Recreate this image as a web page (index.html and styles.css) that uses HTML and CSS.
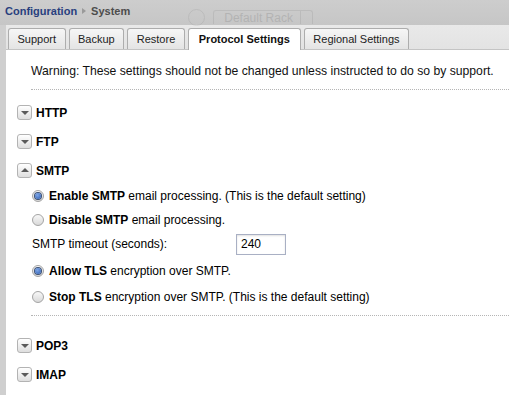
FILE: index.html
```html
<!DOCTYPE html>
<html lang="en">
<head>
    <meta charset="UTF-8">
    <meta name="viewport" content="width=device-width, initial-scale=1.0">
    <title>Configuration - System</title>
    <link rel="stylesheet" href="styles.css">
</head>
<body>
    <!-- Header with breadcrumb -->
    <div class="header">
        <div class="crumbs">
            <a href="#" class="crumb-link">Configuration</a>
            <span class="crumb-sep"></span>
            <span class="crumb-current">System</span>
        </div>
        <div class="ghost">
            <span class="ghost-circle"></span>
            <span class="ghost-button">Default Rack<span class="ghost-drop"></span></span>
        </div>
    </div>

    <div class="main">
        <div class="strip"></div>
        <div class="panel">
            <!-- Tabs -->
            <div class="tabs">
                <a href="#" class="tab">Support</a>
                <a href="#" class="tab">Backup</a>
                <a href="#" class="tab">Restore</a>
                <a href="#" class="tab active">Protocol Settings</a>
                <a href="#" class="tab">Regional Settings</a>
            </div>

            <div class="content">
                <div class="warning">Warning: These settings should not be changed unless instructed to do so by support.</div>

                <div class="sections">
                    <div class="section-head"><span class="toggle"></span>HTTP</div>
                    <div class="section-head"><span class="toggle"></span>FTP</div>
                    <div class="section-head"><span class="toggle open"></span>SMTP</div>

                    <div class="section-body">
                        <div class="option-row"><span class="radio checked"></span><span><b>Enable SMTP</b> email processing. (This is the default setting)</span></div>
                        <div class="option-row"><span class="radio"></span><span><b>Disable SMTP</b> email processing.</span></div>
                        <div class="option-row">
                            <span class="field-label">SMTP timeout (seconds):</span>
                            <input type="text" class="field-input" value="240">
                        </div>
                        <div class="option-group">
                            <div class="option-row tall"><span class="radio checked"></span><span><b>Allow TLS</b> encryption over SMTP.</span></div>
                            <div class="option-row tall"><span class="radio"></span><span><b>Stop TLS</b> encryption over SMTP. (This is the default setting)</span></div>
                        </div>
                    </div>

                    <div class="section-head after-body"><span class="toggle"></span>POP3</div>
                    <div class="section-head"><span class="toggle"></span>IMAP</div>
                </div>
            </div>
        </div>
    </div>
</body>
</html>
```

FILE: styles.css
```css
/* Basic reset */
* {
    margin: 0;
    padding: 0;
    box-sizing: border-box;
}

html, body {
    height: 100%;
    overflow: hidden;
}

body {
    font-family: 'Liberation Sans', Arial, sans-serif;
    font-size: 11px;
    color: #000;
    background: #fff;
}

/* Header */
.header {
    height: 25px;
    background: linear-gradient(#cdcdcd, #c6c6c6);
    display: flex;
    align-items: center;
    padding: 0 0 3px 5px;
}

.crumbs {
    display: flex;
    align-items: center;
    font-weight: bold;
}

.crumb-link {
    color: #283f7e;
    text-decoration: none;
}

.crumb-sep {
    width: 0;
    height: 0;
    border-top: 3px solid transparent;
    border-bottom: 3px solid transparent;
    border-left: 4px solid #9a9a9a;
    margin: 0 5px 0 5px;
}

.crumb-current {
    color: #4d4d4d;
}

/* Faded toolbar behind the header */
.ghost {
    display: flex;
    align-items: center;
    margin-left: 58px;
    margin-top: 12px;
    opacity: 0.18;
}

.ghost-circle {
    width: 17px;
    height: 17px;
    border: 1px solid #808080;
    border-radius: 50%;
    margin-right: 8px;
}

.ghost-button {
    display: flex;
    align-items: center;
    height: 14px;
    width: 100px;
    padding-left: 10px;
    border: 1px solid #808080;
    border-bottom: none;
    border-radius: 3px 3px 0 0;
    color: #555;
    font-size: 12px;
}

.ghost-drop {
    margin-left: auto;
    width: 12px;
    height: 100%;
    border-left: 1px solid #808080;
}

/* Main area */
.main {
    display: flex;
    height: calc(100% - 25px);
}

.strip {
    width: 6px;
    background: #cfcfcf;
}

.panel {
    flex: 1;
    display: flex;
    flex-direction: column;
}

/* Tabs */
.tabs {
    height: 25px;
    display: flex;
    align-items: flex-end;
    gap: 3px;
    padding-left: 2px;
    background: linear-gradient(#e9e9e9, #e3e3e3);
    border-bottom: 1px solid #c4c4c4;
}

.tab {
    height: 21px;
    display: flex;
    align-items: center;
    padding: 0 8.5px;
    border: 1px solid #adadad;
    border-bottom: none;
    border-radius: 3px 3px 0 0;
    background: linear-gradient(#f6f6f6, #e4e4e4);
    color: #222;
    text-decoration: none;
}

.tab.active {
    height: 22px;
    margin-bottom: -1px;
    padding: 0 10px 1px;
    background: #fff;
    font-weight: bold;
    color: #111;
}

/* Content */
.content {
    flex: 1;
    background: #fff;
}

.warning {
    margin-left: 25px;
    padding: 14px 0 11px;
    line-height: 14px;
    font-size: 12.2px;
    border-bottom: 1px dotted #b5b5b5;
    color: #111;
}

.sections {
    padding: 8px 0 0 11px;
    font-size: 12px;
}

.section-head {
    height: 29px;
    display: flex;
    align-items: center;
    gap: 4px;
    font-weight: bold;
}

.section-head.after-body {
    margin-top: 15px;
}

/* Collapse toggle */
.toggle {
    width: 15px;
    height: 15px;
    border: 1px solid #b3b3b3;
    border-radius: 3px;
    background: linear-gradient(#ffffff, #dedede);
    display: flex;
    align-items: center;
    justify-content: center;
}

.toggle::after {
    content: '';
    width: 0;
    height: 0;
    border-left: 4px solid transparent;
    border-right: 4px solid transparent;
    border-top: 4px solid #5a5a5a;
    margin-top: 1px;
}

.toggle.open::after {
    border-top: none;
    border-bottom: 4px solid #5a5a5a;
    margin-top: -1px;
}

/* SMTP options */
.section-body {
    margin: -1px 0 0 14px;
    padding-bottom: 5px;
    border-bottom: 1px dotted #b5b5b5;
}

.option-row {
    height: 24px;
    display: flex;
    align-items: center;
    gap: 5px;
    padding-left: 1px;
}

.option-group {
    margin-top: 2px;
}

.option-row.tall {
    height: 26px;
}

.radio {
    width: 12px;
    height: 12px;
    border: 1px solid #a4a4a4;
    border-radius: 50%;
    background: linear-gradient(#f8f8f8, #d9d9d9);
    display: flex;
    align-items: center;
    justify-content: center;
}

.radio.checked::after {
    content: '';
    width: 6px;
    height: 6px;
    border-radius: 50%;
    background: radial-gradient(circle at 40% 35%, #7ea6e6, #2a5cb3);
    box-shadow: 0 0 0 1px #3a4f73;
}

.field-label {
    width: 199px;
}

.field-input {
    width: 50px;
    height: 21px;
    border: 1px solid #a9b0c4;
    box-shadow: inset 0 1px 2px rgba(0, 0, 0, 0.12);
    padding-left: 4px;
    font-family: 'Liberation Sans', Arial, sans-serif;
    font-size: 12px;
    color: #000;
    outline: none;
}
```
